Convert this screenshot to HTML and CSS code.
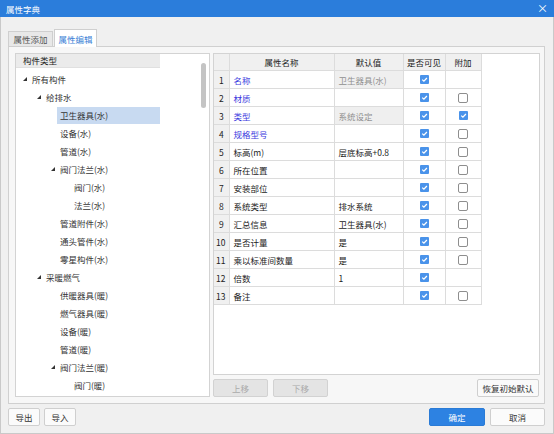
FILE: index.html
```html
<!DOCTYPE html>
<html>
<head>
<meta charset="utf-8">
<link rel="stylesheet" href="styles.css">
</head>
<body>
<div class="window">
  <div class="titlebar"><span>属性字典</span><span class="close">×</span></div>
  <div class="main">
    <div class="tabs">
      <div class="tab">属性添加</div>
      <div class="tab active">属性编辑</div>
    </div>
    <div class="panel">
      <div class="tree">
        <div class="tree-head">构件类型</div>
        <div class="row l0"><span class="tg open"></span><span class="lb">所有构件</span></div>
        <div class="row l1"><span class="tg open"></span><span class="lb">给排水</span></div>
        <div class="row l2 sel"><span class="tg"></span><span class="lb">卫生器具(水)</span></div>
        <div class="row l2"><span class="tg"></span><span class="lb">设备(水)</span></div>
        <div class="row l2"><span class="tg"></span><span class="lb">管道(水)</span></div>
        <div class="row l2"><span class="tg open"></span><span class="lb">阀门法兰(水)</span></div>
        <div class="row l3"><span class="tg"></span><span class="lb">阀门(水)</span></div>
        <div class="row l3"><span class="tg"></span><span class="lb">法兰(水)</span></div>
        <div class="row l2"><span class="tg"></span><span class="lb">管道附件(水)</span></div>
        <div class="row l2"><span class="tg"></span><span class="lb">通头管件(水)</span></div>
        <div class="row l2"><span class="tg"></span><span class="lb">零星构件(水)</span></div>
        <div class="row l1"><span class="tg open"></span><span class="lb">采暖燃气</span></div>
        <div class="row l2"><span class="tg"></span><span class="lb">供暖器具(暖)</span></div>
        <div class="row l2"><span class="tg"></span><span class="lb">燃气器具(暖)</span></div>
        <div class="row l2"><span class="tg"></span><span class="lb">设备(暖)</span></div>
        <div class="row l2"><span class="tg"></span><span class="lb">管道(暖)</span></div>
        <div class="row l2"><span class="tg open"></span><span class="lb">阀门法兰(暖)</span></div>
        <div class="row l3"><span class="tg"></span><span class="lb">阀门(暖)</span></div>
        <div class="scroll-thumb"></div>
      </div>
      <div class="right">
        <div class="grid-box">
          <table class="grid">
            <colgroup><col class="c-num"><col class="c-name"><col class="c-def"><col class="c-vis"><col class="c-add"></colgroup>
            <thead>
              <tr><th class="num"></th><th>属性名称</th><th>默认值</th><th>是否可见</th><th>附加</th></tr>
            </thead>
            <tbody>
              <tr><td class="num">1</td><td class="nm blue">名称</td><td class="dv ro">卫生器具(水)</td><td class="ck"><span class="cb on"></span></td><td class="ck"></td></tr>
              <tr><td class="num">2</td><td class="nm blue">材质</td><td class="dv"></td><td class="ck"><span class="cb on"></span></td><td class="ck"><span class="cb"></span></td></tr>
              <tr><td class="num">3</td><td class="nm blue">类型</td><td class="dv ro">系统设定</td><td class="ck"><span class="cb on"></span></td><td class="ck"><span class="cb on"></span></td></tr>
              <tr><td class="num">4</td><td class="nm blue">规格型号</td><td class="dv"></td><td class="ck"><span class="cb on"></span></td><td class="ck"><span class="cb"></span></td></tr>
              <tr><td class="num">5</td><td class="nm">标高(m)</td><td class="dv">层底标高+0.8</td><td class="ck"><span class="cb on"></span></td><td class="ck"><span class="cb"></span></td></tr>
              <tr><td class="num">6</td><td class="nm">所在位置</td><td class="dv"></td><td class="ck"><span class="cb on"></span></td><td class="ck"><span class="cb"></span></td></tr>
              <tr><td class="num">7</td><td class="nm">安装部位</td><td class="dv"></td><td class="ck"><span class="cb on"></span></td><td class="ck"><span class="cb"></span></td></tr>
              <tr><td class="num">8</td><td class="nm">系统类型</td><td class="dv">排水系统</td><td class="ck"><span class="cb on"></span></td><td class="ck"><span class="cb"></span></td></tr>
              <tr><td class="num">9</td><td class="nm">汇总信息</td><td class="dv">卫生器具(水)</td><td class="ck"><span class="cb on"></span></td><td class="ck"><span class="cb"></span></td></tr>
              <tr><td class="num n2">10</td><td class="nm">是否计量</td><td class="dv">是</td><td class="ck"><span class="cb on"></span></td><td class="ck"><span class="cb"></span></td></tr>
              <tr><td class="num n2">11</td><td class="nm">乘以标准间数量</td><td class="dv">是</td><td class="ck"><span class="cb on"></span></td><td class="ck"><span class="cb"></span></td></tr>
              <tr><td class="num n2">12</td><td class="nm">倍数</td><td class="dv">1</td><td class="ck"><span class="cb on"></span></td><td class="ck"></td></tr>
              <tr><td class="num n2">13</td><td class="nm">备注</td><td class="dv"></td><td class="ck"><span class="cb on"></span></td><td class="ck"><span class="cb"></span></td></tr>
            </tbody>
          </table>
        </div>
        <div class="right-btns">
          <button class="btn dis">上移</button>
          <button class="btn dis">下移</button>
          <span class="spacer"></span>
          <button class="btn wide">恢复初始默认</button>
        </div>
      </div>
    </div>
    <div class="bottom">
      <button class="btn small">导出</button>
      <button class="btn small">导入</button>
      <span class="spacer"></span>
      <button class="btn primary">确定</button>
      <button class="btn">取消</button>
    </div>
  </div>
</div>
</body>
</html>
```
FILE: styles.css
```css
html, body {
  margin: 0;
  padding: 0;
}
body {
  width: 554px;
  height: 434px;
  overflow: hidden;
  background: #f0f0f0;
  font-family: "Noto Sans CJK SC", "Noto Sans", sans-serif;
  font-size: 8.5px;
  color: #333;
}
.window {
  height: 434px;
  display: flex;
  flex-direction: column;
}
.titlebar {
  height: 17px;
  flex: none;
  background: #2b7ddb;
  color: #fff;
  display: flex;
  align-items: center;
  justify-content: space-between;
  padding: 0 6px;
  font-size: 8.5px;
}
.close {
  font-size: 11px;
  line-height: 1;
  margin-right: 0;
}
.main {
  flex: 1;
  padding: 12px 9px 0 8px;
  display: flex;
  flex-direction: column;
  box-shadow: inset 1px 0 #c9c9c9, inset -1px 0 #c9c9c9, inset 0 -1px #c9c9c9;
}
.tabs {
  display: flex;
  align-items: flex-end;
  gap: 1px;
  height: 18px;
  margin-bottom: -1px;
  position: relative;
  z-index: 1;
}
.tab {
  box-sizing: border-box;
  width: 45px;
  height: 16px;
  border: 1px solid #cfcfcf;
  background: #e8e8e8;
  color: #555;
  display: flex;
  align-items: center;
  justify-content: center;
}
.tab.active {
  width: 43px;
  height: 18px;
  background: #fff;
  border-bottom: none;
  color: #3b7fd6;
}
.panel {
  box-sizing: border-box;
  height: 358px;
  border: 1px solid #d0d0d0;
  background: #f7f7f7;
  padding: 6px 4px 6px 6px;
  display: flex;
  gap: 3px;
}
.tree {
  position: relative;
  box-sizing: border-box;
  width: 195px;
  height: 344px;
  border: 1px solid #d3d3d3;
  background: #fff;
  overflow: hidden;
}
.tree-head {
  width: 144px;
  height: 14px;
  box-sizing: border-box;
  padding-left: 7px;
  background: #ebebeb;
  border-bottom: 1px solid #e0e0e0;
  line-height: 13px;
  margin-bottom: 2px;
  color: #222;
}
.row {
  height: 18px;
  display: flex;
  align-items: center;
}
.row.l0 { padding-left: 7px; }
.row.l1 { padding-left: 21px; }
.row.l2 { padding-left: 35px; }
.row.l3 { padding-left: 49px; }
.tg {
  width: 9px;
  height: 18px;
  flex: none;
  position: relative;
}
.tg.open::before {
  content: "";
  position: absolute;
  left: 0;
  top: 7px;
  width: 0;
  height: 0;
  border-style: solid;
  border-width: 0 0 4px 4px;
  border-color: transparent transparent #333 transparent;
}
.lb {
  display: block;
  margin-left: -3px;
  padding: 0 3px;
  line-height: 17px;
  height: 17px;
  white-space: nowrap;
}
.sel .lb {
  width: 103px;
  box-sizing: border-box;
  background: #c8daf1;
}
.scroll-thumb {
  position: absolute;
  right: 3px;
  top: 9px;
  width: 5px;
  height: 45px;
  border-radius: 3px;
  background: #c4c4c4;
}
.right {
  width: 327px;
  display: flex;
  flex-direction: column;
  gap: 4px;
}
.grid-box {
  box-sizing: border-box;
  height: 322px;
  border: 1px solid #d3d3d3;
  background: #fff;
}
.grid {
  border-collapse: collapse;
  table-layout: fixed;
  width: 267px;
}
.c-num { width: 15px; }
.c-name { width: 105px; }
.c-def { width: 69px; }
.c-vis { width: 42px; }
.c-add { width: 36px; }
.grid th, .grid td {
  border-right: 1px solid #dcdcdc;
  border-bottom: 1px solid #dcdcdc;
  padding: 0;
  white-space: nowrap;
  overflow: hidden;
}
.grid th {
  height: 16px;
  background: #f0f0f0;
  font-weight: normal;
  color: #222;
  text-align: center;
}
.grid td {
  height: 17px;
}
.grid td.num {
  background: #f0f0f0;
  text-align: center;
  color: #222;
}
.grid td.num.n2 {
  text-align: left;
  padding-left: 2px;
}
.grid td.nm, .grid td.dv {
  padding-left: 4px;
  color: #222;
}
.grid td.nm.blue {
  color: #3a3ade;
}
.grid td.dv.ro {
  background: #efefef;
  color: #8f8f8f;
}
.grid td.ck {
  text-align: center;
  line-height: 0;
}
.cb {
  display: inline-block;
  box-sizing: border-box;
  width: 10px;
  height: 10px;
  border: 1px solid #8e8e8e;
  border-radius: 2px;
  background: #fff;
  vertical-align: middle;
}
.cb.on {
  width: 9px;
  height: 9px;
  border: none;
  border-radius: 1px;
  background: #4a93ea url("data:image/svg+xml;utf8,<svg xmlns='http://www.w3.org/2000/svg' width='9' height='9' viewBox='0 0 9 9'><path d='M2.2 4.6 L3.9 6.2 L6.9 3' fill='none' stroke='white' stroke-width='1.3'/></svg>") no-repeat center;
}
.right-btns {
  height: 18px;
  display: flex;
  gap: 5px;
  padding-right: 1px;
}
.spacer { flex: 1; }
.btn {
  box-sizing: border-box;
  height: 18px;
  width: 55px;
  margin: 0;
  padding: 0;
  border: 1px solid #cfcfcf;
  border-radius: 2px;
  background: #fafafa;
  color: #333;
  font-family: "Noto Sans CJK SC", "Noto Sans", sans-serif;
  font-size: 8.5px;
}
.btn.dis {
  background: #e4e4e4;
  border-color: #d2d2d2;
  color: #aaa;
}
.btn.wide {
  width: 62px;
}
.bottom {
  height: 30px;
  box-sizing: border-box;
  padding-top: 4px;
  display: flex;
  gap: 4px;
}
.bottom .btn {
  background: #fbfbfb;
}
.btn.small {
  width: 32px;
}
.bottom .btn.primary {
  width: 56px;
  margin-right: 1px;
  background: #2d82e2;
  border-color: #2a7bd6;
  color: #fff;
}
```
